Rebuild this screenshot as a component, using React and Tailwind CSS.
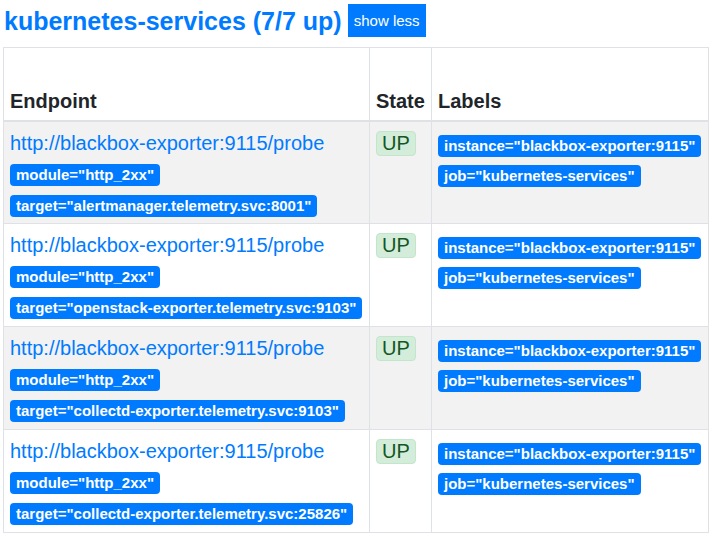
import React from "react";

const rows = [
  { target: 'target="alertmanager.telemetry.svc:8001"' },
  { target: 'target="openstack-exporter.telemetry.svc:9103"' },
  { target: 'target="collectd-exporter.telemetry.svc:9103"' },
  { target: 'target="collectd-exporter.telemetry.svc:25826"' },
];

const Badge = ({ children }) => (
  <span className="inline-block h-[22px] bg-[#007bff] text-white font-bold text-[15px] leading-[22px] px-[6px] rounded-[4px] whitespace-nowrap">
    {children}
  </span>
);

export default function App() {
  return (
    <div className="bg-white min-h-screen pl-[3px] pt-[4px] font-['Liberation_Sans',Arial,sans-serif] text-[#212529]">
      <div className="flex items-center h-[33px] mb-[10px]">
        <span className="pl-[1px] text-[25px] font-bold text-[#007bff] leading-[32px]">
          kubernetes-services (7/7 up)
        </span>
        <button className="ml-[6px] h-[33px] w-[78px] bg-[#007bff] text-white text-[15px] leading-none">
          show less
        </button>
      </div>
      <table className="border-collapse w-[706px] table-fixed">
        <colgroup>
          <col className="w-[366px]" />
          <col className="w-[62px]" />
          <col />
        </colgroup>
        <thead>
          <tr className="h-[73px]">
            <th className="border border-[#dee2e6] border-b-2 align-bottom text-left px-[6px] pb-[7px] text-[20px] font-bold leading-[24px]">
              Endpoint
            </th>
            <th className="border border-[#dee2e6] border-b-2 align-bottom text-left px-[6px] pb-[7px] text-[20px] font-bold leading-[24px]">
              State
            </th>
            <th className="border border-[#dee2e6] border-b-2 align-bottom text-left px-[6px] pb-[7px] text-[20px] font-bold leading-[24px]">
              Labels
            </th>
          </tr>
        </thead>
        <tbody>
          {rows.map((r, i) => (
            <tr key={i} className={`h-[103px] ${i % 2 === 0 ? "bg-[#f2f2f2]" : "bg-white"}`}>
              <td className="border border-[#dee2e6] align-top px-[6px] pt-[6px]">
                <div className="text-[20px] leading-[30px] text-[#007bff]">
                  http://blackbox-exporter:9115/probe
                </div>
                <div className="mt-[5px] h-[22px]">
                  <Badge>module="http_2xx"</Badge>
                </div>
                <div className="mt-[9px] h-[22px]">
                  <Badge>{r.target}</Badge>
                </div>
              </td>
              <td className="border border-[#dee2e6] align-top px-[6px] pt-[9px]">
                <span className="inline-block bg-[#d4edda] text-[#155724] border border-[#c3e6cb] rounded-[4px] text-[20px] leading-[23px] px-[5px]">
                  UP
                </span>
              </td>
              <td className="border border-[#dee2e6] align-top px-[6px] pt-[12px]">
                <div className="h-[22px]">
                  <Badge>instance="blackbox-exporter:9115"</Badge>
                </div>
                <div className="mt-[8px] h-[22px]">
                  <Badge>job="kubernetes-services"</Badge>
                </div>
              </td>
            </tr>
          ))}
        </tbody>
      </table>
    </div>
  );
}
